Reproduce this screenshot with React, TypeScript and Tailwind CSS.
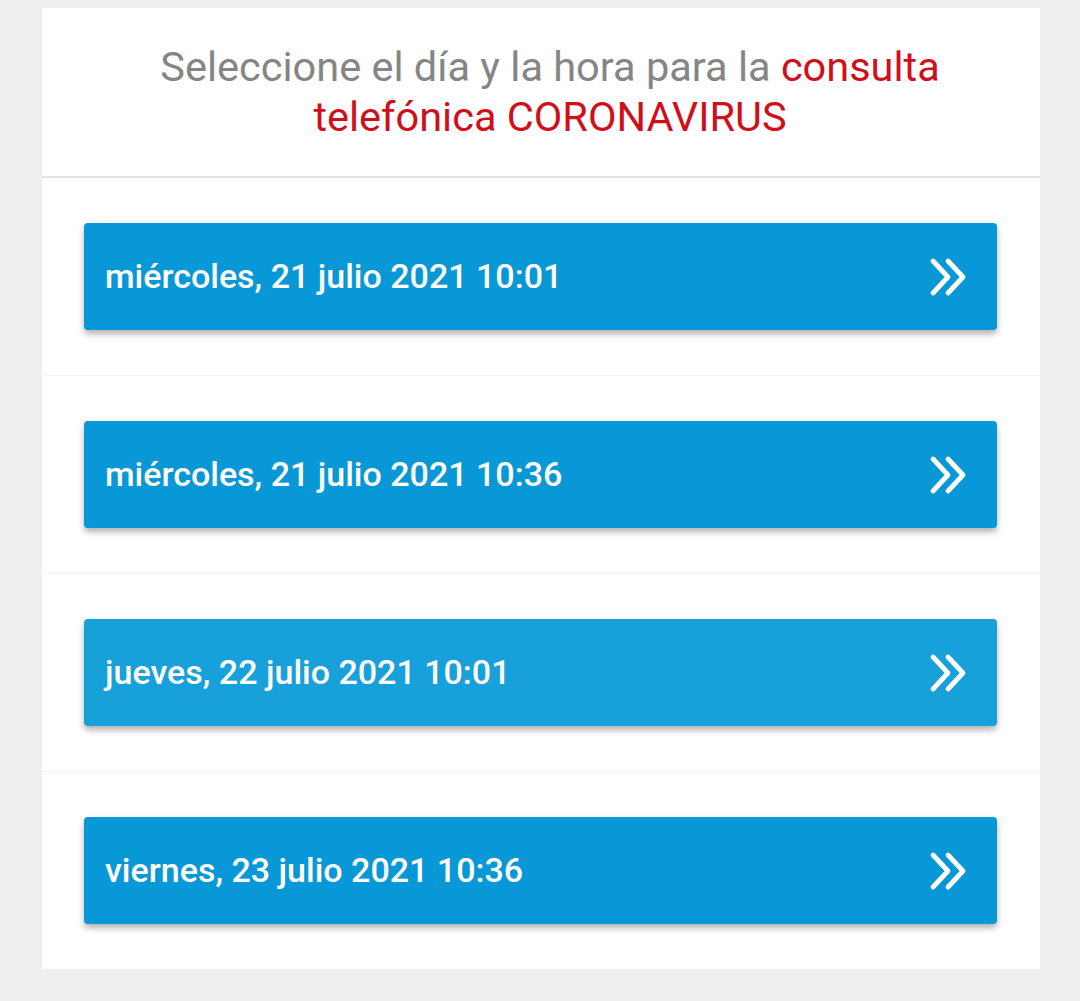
const slots = [
  { label: 'miércoles, 21 julio 2021 10:01', bg: 'bg-[#0897d7]' },
  { label: 'miércoles, 21 julio 2021 10:36', bg: 'bg-[#0897d7]' },
  { label: 'jueves, 22 julio 2021 10:01', bg: 'bg-[#18a0db]' },
  { label: 'viernes, 23 julio 2021 10:36', bg: 'bg-[#0897d7]' },
];

function DoubleChevron() {
  return (
    <svg width="44" height="44" viewBox="0 0 44 44" fill="none" stroke="white" strokeWidth="4.8" strokeLinecap="round" strokeLinejoin="round">
      <path d="M7 6 L22 22 L7 38" />
      <path d="M22 6 L37 22 L22 38" />
    </svg>
  );
}

export default function App() {
  return (
    <div className="min-h-[1001px] w-[1080px] bg-[#efefef] pt-2 font-['Roboto',sans-serif]">
      <div className="ml-[42px] w-[998px] bg-white">
        {/* Header */}
        <div className="border-b-2 border-[#e2e2e2] py-[34px] pl-[18px] text-center text-[41.5px] leading-[50px] text-[#858585]">
          Seleccione el día y la hora para la <span className="text-[#d10f1b]">consulta</span>
          <br />
          <span className="text-[#d10f1b]">telefónica CORONAVIRUS</span>
        </div>

        {/* Slots */}
        <div>
          {slots.map((s, i) => (
            <div
              key={i}
              className={`px-[42px] pt-[45px] pb-[45px] ${i < slots.length - 1 ? 'border-b border-[#f4f4f4]' : ''}`}
            >
              <button
                type="button"
                className={`flex h-[107px] w-[913px] items-center justify-between rounded-[4px] ${s.bg} pl-[21px] pr-[27px] text-left text-[34px] font-medium text-white shadow-[0_4px_6px_rgba(0,0,0,0.3)]`}
              >
                <span>{s.label}</span>
                <DoubleChevron />
              </button>
            </div>
          ))}
        </div>
      </div>
    </div>
  );
}
